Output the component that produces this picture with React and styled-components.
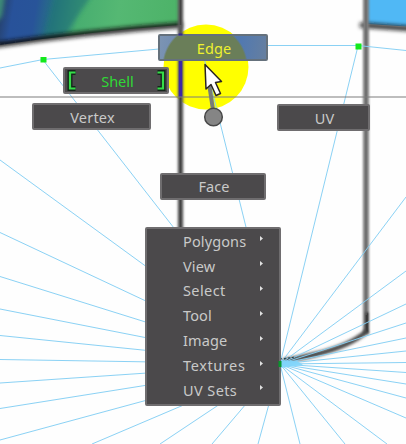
import React from 'react';
import styled, { createGlobalStyle, css } from 'styled-components';

const Global = createGlobalStyle`
  body { margin: 0; background: #fefefe; }
`;

const Viewport = styled.main`
  position: relative;
  width: 406px;
  height: 444px;
  overflow: hidden;
  background: #fefefe;
  font: 14.5px/1 'Noto Sans', sans-serif;
  color: #c9c9c9;
`;

const Drawing = styled.svg`
  position: absolute;
  inset: 0;
  display: block;
  pointer-events: none;
`;

const MarkingButton = styled.button`
  position: absolute;
  left: ${(p) => p.$x}px;
  top: ${(p) => p.$y}px;
  width: ${(p) => p.$w}px;
  height: 27px;
  box-sizing: border-box;
  display: flex;
  align-items: center;
  justify-content: center;
  padding: ${(p) => (p.$raised ? '0 0 1px 2px' : '1px 0 0 2px')};
  border: 2px solid #6f6d6f;
  border-radius: 2px;
  background: #4b494b;
  color: inherit;
  font: inherit;
  letter-spacing: ${(p) => p.$spacing || 0}px;

  ${(p) =>
    p.$hot &&
    css`
      border-color: #65717c;
      color: #eff12e;
      background:
        radial-gradient(circle at 45px 31px, #6a7e59 41px, transparent 43px),
        linear-gradient(100deg, #7c94b3, #5377ad 60%, #5279b0 75%, #667f9f);
    `}
  ${(p) =>
    p.$active &&
    css`
      justify-content: space-between;
      padding: 0 1px 0 2px;
      color: #30d936;
    `}
`;

const ActiveLabel = styled.span`
  padding: 1px 0 0 2px;
`;

const Bracket = styled.svg`
  display: block;
  transform: ${(p) => (p.$end ? 'scaleX(-1)' : 'none')};
`;

const Menu = styled.ul`
  position: absolute;
  left: 145px;
  top: 227px;
  width: 136px;
  height: 179px;
  box-sizing: border-box;
  margin: 0;
  padding: 0 16px 0 36px;
  border: 2px solid #6f6d6f;
  border-radius: 2px;
  background: #4b494b;
  list-style: none;
`;

const MenuItem = styled.li`
  display: flex;
  align-items: center;
  justify-content: space-between;
  height: 24.85px;
  padding-bottom: 1px;
  box-sizing: border-box;
  letter-spacing: ${(p) => p.$spacing}px;
`;

const Arrow = styled.svg`
  display: block;
  margin-bottom: 4px;
`;

const items = [
  ['Polygons', 0.12],
  ['View', 0.1],
  ['Select', 0.4],
  ['Tool', 0.1],
  ['Image', 0.1],
  ['Textures', 0.6],
  ['UV Sets', 0.4],
];

const hub = [280, 364];
const rays = [
  [0, 160], [0, 232.5], [0, 276.5], [0, 309], [0, 335.5], [0, 359.5],
  [0, 383], [0, 408.5], [0, 440], [92, 444], [160, 444], [212, 444],
  [258, 444], [300, 444], [345, 444], [387, 444], [406, 418], [406, 398],
  [406, 384], [406, 372.5], [406, 362.5], [406, 351], [406, 338],
  [406, 323], [406, 304], [406, 271], [406, 197], [358, 46], [204, 58],
  [43, 60],
];

function BracketMark({ end }) {
  return (
    <Bracket $end={end} width="10" height="21" viewBox="0 0 10 21">
      <path d="M8.500 2.500H3V18.500H8.500" fill="none" stroke="#14251a" strokeWidth="5" />
      <path d="M8.500 2.500H3V18.500H8.500" fill="none" stroke="#35dc48" strokeWidth="2.200" />
    </Bracket>
  );
}

function Mesh() {
  return (
    <Drawing width="406" height="444" viewBox="0 0 406 444">
      <defs>
        <linearGradient id="teal" x1="0" y1="0" x2="180" y2="32" gradientUnits="userSpaceOnUse">
          <stop offset="0" stopColor="#263f66" />
          <stop offset=".08" stopColor="#28529a" />
          <stop offset=".2" stopColor="#285499" />
          <stop offset=".31" stopColor="#277681" />
          <stop offset=".44" stopColor="#48ae70" />
          <stop offset=".65" stopColor="#55b873" />
          <stop offset="1" stopColor="#4cb267" />
        </linearGradient>
        <filter id="soft" filterUnits="userSpaceOnUse" x="-20" y="-20" width="450" height="100">
          <feGaussianBlur stdDeviation="2" />
        </filter>
        <filter id="edge" filterUnits="userSpaceOnUse" x="-10" y="-20" width="430" height="480">
          <feGaussianBlur stdDeviation=".9" />
        </filter>
        <filter id="shade" filterUnits="userSpaceOnUse" x="260" y="310" width="140" height="70">
          <feGaussianBlur stdDeviation="1.6" />
        </filter>
        <clipPath id="patch"><path d="M0 0H180V25Q95 31 0 45Z" /></clipPath>
      </defs>
      <g clipPath="url(#patch)">
        <path d="M0 0H180V27L0 47Z" fill="url(#teal)" />
        <path d="M-10-10H6L2 16L-10 30Z" fill="#3c8a78" filter="url(#soft)" />
        <path d="M55-5L43 40L62 39L92-5Z" fill="#247477" opacity=".65" filter="url(#soft)" />
      </g>
      <path d="M-5 45Q85 32 182 25" fill="none" stroke="#161616" strokeWidth="5" filter="url(#soft)" />
      <path d="M367-5H412V27L367 24Z" fill="#50b8f5" />
      <path d="M360 25L415 29" stroke="#151515" strokeWidth="4.5" filter="url(#soft)" />
      <circle cx="206" cy="67" r="42.500" fill="#ffff00" />
      <g filter="url(#edge)">
        <path d="M180.500-5V230" stroke="#5a5a5a" strokeWidth="5.500" />
        <path d="M366-5V334" stroke="#7c7c7c" strokeWidth="6" />
        <path d="M367 312V333" stroke="#222" strokeWidth="3.500" />
      </g>
      <path
        d="M367 331Q350 346 317 354T282 360"
        fill="none"
        stroke="#444"
        strokeWidth="5"
        filter="url(#shade)"
      />
      <path d="M180.500 0V25M180.500 97V230" stroke="#444" strokeWidth="1.500" />
      <path d="M180.500 60V97" stroke="#3c28a6" strokeWidth="3.500" />
      <path d="M366 0V315" stroke="#666" strokeWidth="1" />
      <g fill="none" stroke="#84cff3" strokeWidth=".95">
        {rays.map(([x, y]) => (
          <path key={`${x}-${y}`} d={`M${hub[0]} ${hub[1]}L${x} ${y}`} />
        ))}
        <path d="M0 68L43 59.500L159 49L204 45.500H358L406 50.500" />
      </g>
      <path d="M280 360L297 361L303 365L280 368Z" fill="#80d5fb" opacity=".9" />
      <path d="M280 359L296 357" stroke="#183e49" strokeDasharray="2 2" />
      <path d="M0 97H406" stroke="#7d7d7d" />
      <path d="M40.500 57h6v5.500h-6zM355.500 43.500h6v6h-6z" fill="#13e91b" />
    </Drawing>
  );
}

function Pointer() {
  return (
    <Drawing width="406" height="444" viewBox="0 0 406 444">
      <path d="M280 361V367" stroke="#07962b" strokeWidth="3" />
      <path d="M180.500 33.500V35.500" stroke="#332890" strokeWidth="4" />
      <path d="M208.500 80L213 110" stroke="#777b79" strokeWidth="4" />
      <circle cx="213.500" cy="117" r="8.800" fill="#858585" stroke="#484848" strokeWidth="1.500" />
      <path
        d="M205 64.500L206 89L211 84.500L216 95.500L220.500 93.500L215.500 82.500L221.500 81.500Z"
        fill="#fff"
        stroke="#292424"
        strokeWidth="1.500"
        strokeLinejoin="round"
      />
    </Drawing>
  );
}

export default function App() {
  return (
    <>
      <Global />
      <Viewport>
        <Mesh />
        <MarkingButton $x={158} $y={34} $w={110} $spacing={0.1} $hot>Edge</MarkingButton>
        <MarkingButton $x={63} $y={67} $w={106} $active>
          <BracketMark />
          <ActiveLabel>Shell</ActiveLabel>
          <BracketMark end />
        </MarkingButton>
        <MarkingButton $x={32} $y={103} $w={119} $spacing={0.2}>Vertex</MarkingButton>
        <MarkingButton $x={277} $y={104} $w={93}>UV</MarkingButton>
        <MarkingButton $x={160} $y={173} $w={106} $raised>Face</MarkingButton>
        <Menu>
          {items.map(([label, spacing]) => (
            <MenuItem key={label} $spacing={spacing}>
              {label}
              <Arrow width="3" height="5" viewBox="0 0 3 5">
                <path d="M0 0L3 2.500L0 5Z" fill="#e2e2e2" />
              </Arrow>
            </MenuItem>
          ))}
        </Menu>
        <Pointer />
      </Viewport>
    </>
  );
}
